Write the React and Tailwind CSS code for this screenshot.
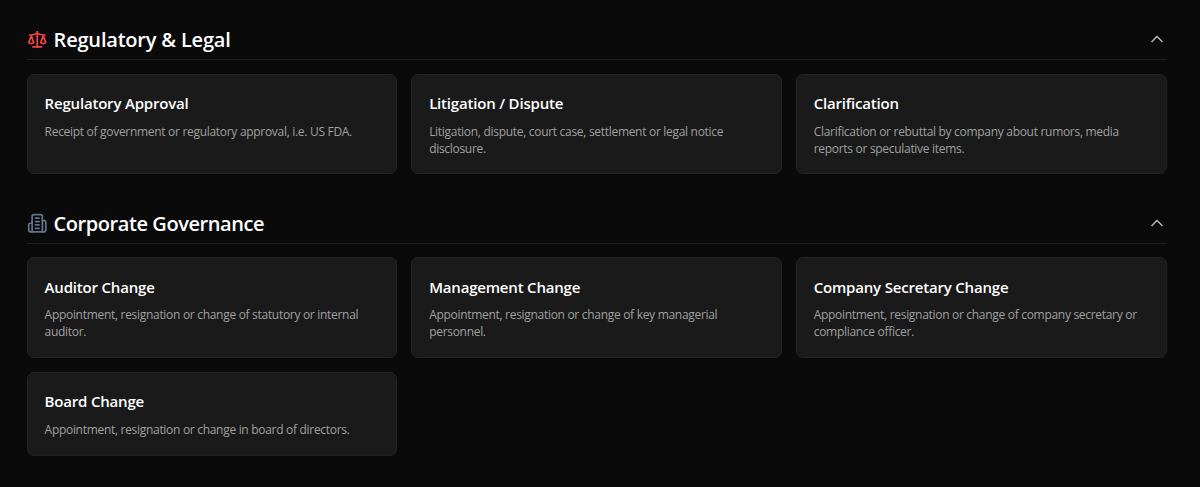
import React, { useState } from "react";
import { ChevronUp } from "lucide-react";

function ScaleIcon() {
  return (
    <svg className="w-[20.5px] h-[20.5px] shrink-0 text-[#ef4444]" viewBox="0 0 24 24" fill="none" stroke="currentColor" strokeWidth="2" strokeLinecap="round" strokeLinejoin="round">
      <path d="m16 16 3-8 3 8c-.87.65-1.92 1-3 1s-2.13-.35-3-1Z" />
      <path d="m2 16 3-8 3 8c-.87.65-1.92 1-3 1s-2.13-.35-3-1Z" />
      <path d="M7 21h10" />
      <path d="M12 3v18" />
      <path d="M3 7h2c2 0 5-1 7-2 2 1 5 2 7 2h2" />
    </svg>
  );
}

function BuildingIcon() {
  return (
    <svg className="w-[20.5px] h-[20.5px] shrink-0 text-[#64748b]" viewBox="0 0 24 24" fill="none" stroke="currentColor" strokeWidth="2" strokeLinecap="round" strokeLinejoin="round">
      <path d="M6 22V4a2 2 0 0 1 2-2h8a2 2 0 0 1 2 2v18Z" />
      <path d="M6 12H4a2 2 0 0 0-2 2v6a2 2 0 0 0 2 2h2" />
      <path d="M18 9h2a2 2 0 0 1 2 2v9a2 2 0 0 1-2 2h-2" />
      <path d="M10 6h4" />
      <path d="M10 10h4" />
      <path d="M10 14h4" />
      <path d="M10 18h4" />
    </svg>
  );
}

const sections = [
  {
    title: "Regulatory & Legal",
    tracking: "tracking-[-0.2px]",
    icon: ScaleIcon,
    items: [
      { title: "Regulatory Approval", text: "Receipt of government or regulatory approval, i.e. US FDA." },
      { title: "Litigation / Dispute", text: "Litigation, dispute, court case, settlement or legal notice disclosure." },
      { title: "Clarification", text: "Clarification or rebuttal by company about rumors, media reports or speculative items." },
    ],
  },
  {
    title: "Corporate Governance",
    tracking: "tracking-[-0.43px]",
    icon: BuildingIcon,
    items: [
      { title: "Auditor Change", text: "Appointment, resignation or change of statutory or internal auditor." },
      { title: "Management Change", text: "Appointment, resignation or change of key managerial personnel." },
      { title: "Company Secretary Change", text: "Appointment, resignation or change of company secretary or compliance officer." },
      { title: "Board Change", text: "Appointment, resignation or change in board of directors." },
    ],
  },
];

function Section({ section }) {
  const [open, setOpen] = useState(true);
  const Icon = section.icon;

  return (
    <section>
      <button
        onClick={() => setOpen(!open)}
        className="w-full h-[34px] pb-[6px] mb-[13.5px] flex items-center justify-between border-b border-[#1f1f1f] text-left"
      >
        <span className="flex items-center gap-[6.5px]">
          <Icon />
          <h2 className={`text-[20px] leading-[27px] font-semibold text-white ${section.tracking}`}>{section.title}</h2>
        </span>
        <ChevronUp className={open ? "w-5 h-5 mb-px text-[#b0b0b0]" : "w-5 h-5 text-[#b0b0b0] rotate-180"} />
      </button>

      {open && (
        <div className="grid grid-cols-3 gap-[13.7px]">
          {section.items.map((item) => (
            <div key={item.title} className="bg-[#1a1a1a] border border-[#242424] rounded-[7px] px-[17px] pt-[16.7px] pb-[16.5px]">
              <h3 className="text-[15px] leading-6 tracking-[-0.19px] font-semibold text-white mb-[7.6px]">{item.title}</h3>
              <p className="text-[12px] leading-[17.1px] tracking-[-0.3px] text-[#a0a0a0]">{item.text}</p>
            </div>
          ))}
        </div>
      )}
    </section>
  );
}

export default function App() {
  return (
    <div className="min-h-screen bg-[#0a0a0a] font-['Open_Sans',sans-serif] pt-[26px] pl-[26.6px] pr-[33.4px] flex flex-col gap-[35.1px]">
      {sections.map((section) => (
        <Section key={section.title} section={section} />
      ))}
    </div>
  );
}
